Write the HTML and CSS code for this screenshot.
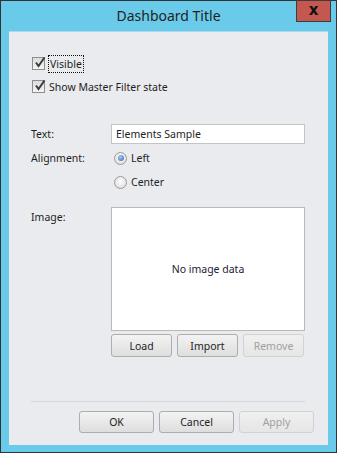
FILE: index.html
```html
<!DOCTYPE html>
<html lang="en">
<head>
  <meta charset="UTF-8" />
  <title>Dashboard Title</title>
  <link rel="stylesheet" href="styles.css">
</head>
<body>
  <div class="window">
    <div class="titlebar">
      <span></span>
      <span class="title">Dashboard Title</span>
      <button class="close">x</button>
    </div>

    <div class="client">
      <div class="checks">
        <label class="check">
          <span class="box">
            <svg width="13" height="13" viewBox="0 0 13 13"><path d="M3 6.5 L5.5 10 L11.5 1.5" fill="none" stroke="#3c3c3c" stroke-width="2"/></svg>
          </span>
          <span class="focus">Visible</span>
        </label>
        <label class="check">
          <span class="box">
            <svg width="13" height="13" viewBox="0 0 13 13"><path d="M3 6.5 L5.5 10 L11.5 1.5" fill="none" stroke="#3c3c3c" stroke-width="2"/></svg>
          </span>
          <span>Show Master Filter state</span>
        </label>
      </div>

      <div class="form">
        <div class="label">Text:</div>
        <div class="textbox">Elements Sample</div>

        <div class="label align-label">Alignment:</div>
        <div class="radios">
          <label class="radio"><span class="dot on"></span>Left</label>
          <label class="radio"><span class="dot"></span>Center</label>
        </div>

        <div class="label image-label">Image:</div>
        <div class="image-col">
          <div class="picture">No image data</div>
          <div class="pic-buttons">
            <button class="btn">Load</button>
            <button class="btn">Import</button>
            <button class="btn" disabled>Remove</button>
          </div>
        </div>
      </div>

      <div class="separator"></div>
      <div class="footer">
        <button class="btn wide">OK</button>
        <button class="btn wide">Cancel</button>
        <button class="btn wide" disabled>Apply</button>
      </div>
    </div>
  </div>
</body>
</html>
```

FILE: styles.css
```css
body {
  margin: 0;
  font-family: 'Noto Sans', 'Open Sans', sans-serif;
  font-size: 10.5px;
  color: #1e1e1e;
}

.window {
  width: 337px;
  height: 453px;
  box-sizing: border-box;
  border: 1px solid #333;
  background-color: #69cbe9;
  display: flex;
  flex-direction: column;
}

.titlebar {
  height: 30px;
  display: grid;
  grid-template-columns: 1fr auto 1fr;
  align-items: start;
}

.title {
  font-size: 14px;
  line-height: 29px;
  color: #1f1f1f;
}

.close {
  justify-self: end;
  margin: -1px 5px 0 0;
  width: 35px;
  height: 22px;
  border: 1px solid #3d3d3d;
  background-color: #c4574f;
  color: #111;
  font-family: 'DejaVu Sans', sans-serif;
  font-size: 15px;
  font-weight: bold;
  line-height: 16px;
  padding: 0 0 2px;
}

.client {
  flex: 1;
  margin: 0 8px 7px;
  background-color: #eaebee;
  border-top: 1px solid #a9d9ea;
  padding: 0 23px 0 22px;
  display: flex;
  flex-direction: column;
}

.checks {
  padding-top: 20px;
  padding-left: 1px;
}

.check {
  display: flex;
  align-items: center;
  gap: 4px;
  height: 23px;
}

.box {
  width: 11px;
  height: 11px;
  border: 1px solid #8e8e8e;
  background: linear-gradient(#dcdcdc, #f4f4f4);
  position: relative;
}

.box svg {
  position: absolute;
  left: 0;
  top: -2px;
}

.focus {
  outline: 1px dotted #111;
  padding: 1px 1px;
}

.form {
  margin-top: 26px;
  display: grid;
  grid-template-columns: 80px 194px;
}

.label {
  line-height: 20px;
}

.textbox {
  height: 18px;
  line-height: 18px;
  border: 1px solid #c4c4c4;
  background: white;
  padding-left: 4px;
}

.align-label {
  margin-top: 2px;
  line-height: 24px;
}

.radios {
  display: flex;
  flex-direction: column;
  margin-top: 2px;
  padding-left: 3px;
}

.radio {
  display: flex;
  align-items: center;
  gap: 4px;
  height: 24px;
}

.dot {
  width: 11px;
  height: 11px;
  border-radius: 50%;
  border: 1px solid #9a9a9a;
  background: radial-gradient(circle at 50% 40%, #ffffff, #d6d6d6);
  display: flex;
  align-items: center;
  justify-content: center;
}

.dot.on::after {
  content: "";
  width: 6px;
  height: 6px;
  border-radius: 50%;
  background: radial-gradient(circle at 40% 35%, #a8c8f4, #3465b8);
}

.image-label,
.image-col {
  margin-top: 13px;
}

.picture {
  height: 122px;
  border: 1px solid #b9b9b9;
  background: white;
  display: flex;
  align-items: center;
  justify-content: center;
  color: #1b1b3a;
}

.pic-buttons {
  display: flex;
  gap: 5px;
  margin-top: 3px;
}

.btn {
  font-family: inherit;
  font-size: 10.5px;
  color: #1e1e1e;
  width: 61px;
  height: 23px;
  padding: 0;
  border: 1px solid #adadad;
  border-radius: 3px;
  background: linear-gradient(#f3f3f3, #dedede);
}

.btn:disabled {
  color: #a0a0a0;
  border-color: #d2d2d2;
  background: linear-gradient(#f0f0f0, #e6e6e6);
}

.separator {
  margin-top: auto;
  height: 1px;
  background-color: #d6d6d9;
}

.footer {
  margin-right: -9px;
  padding: 9px 0 12px;
  display: flex;
  justify-content: flex-end;
  gap: 5px;
}

.btn.wide {
  width: 75px;
  height: 22px;
}
```
